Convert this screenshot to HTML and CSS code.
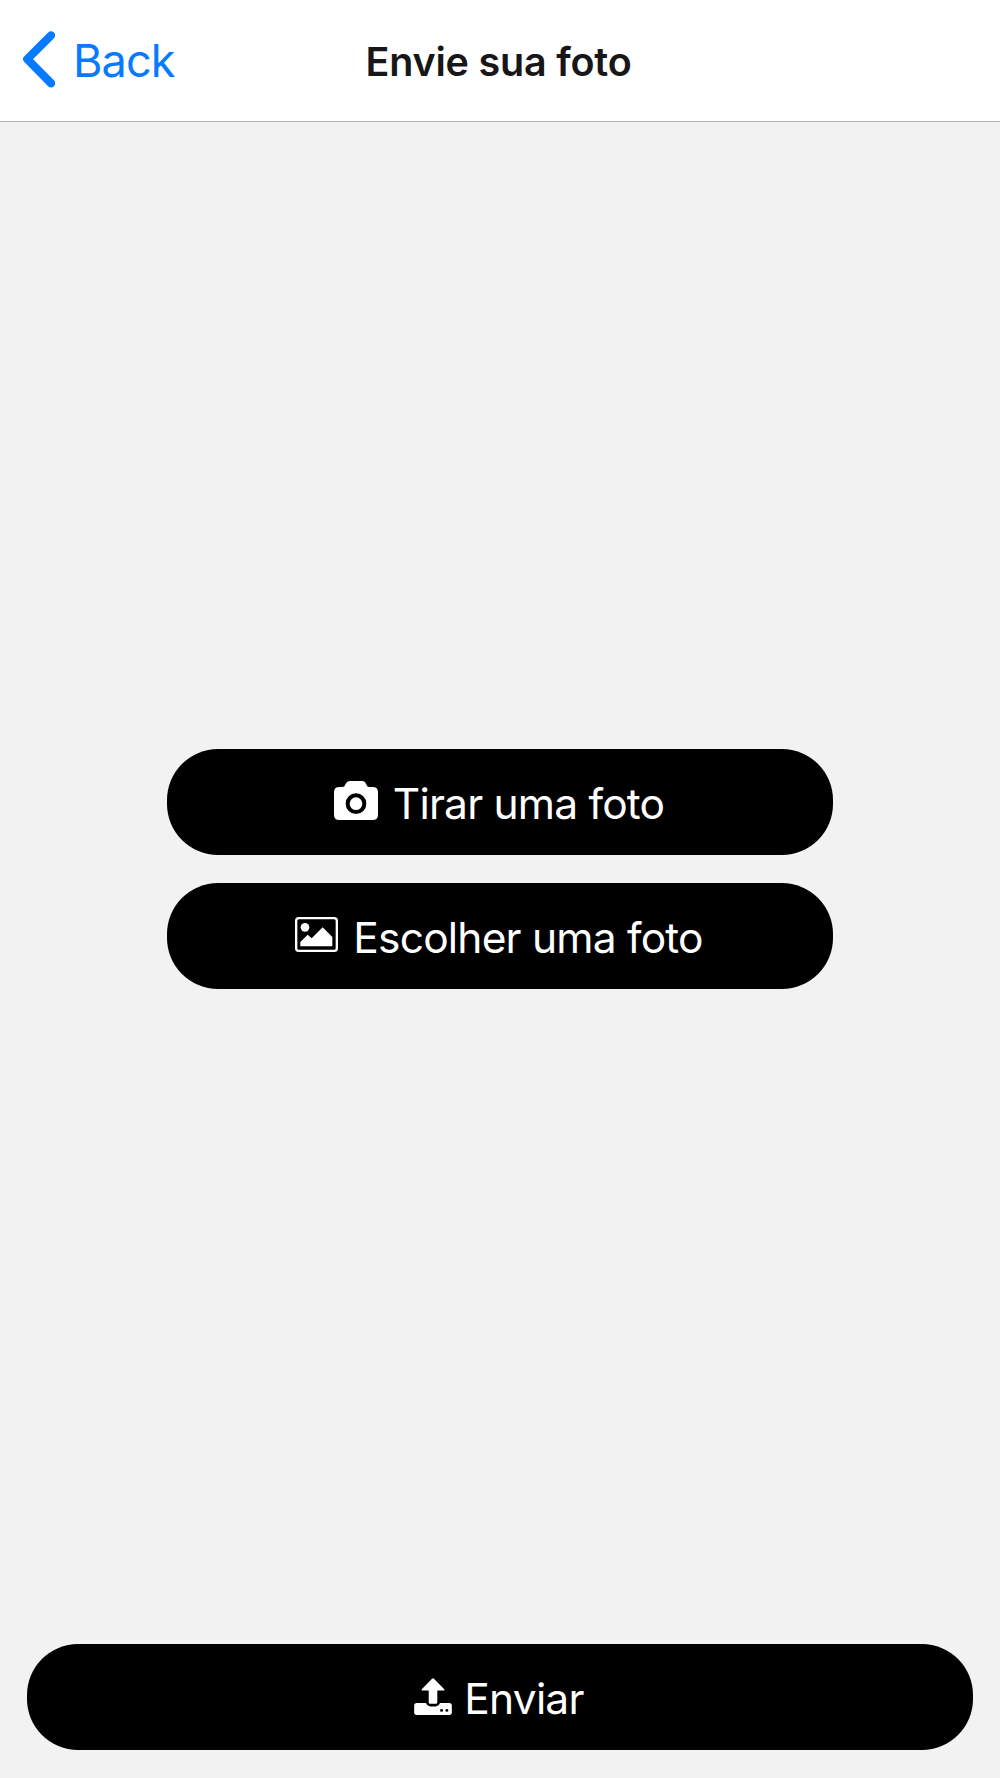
FILE: index.html
```html
<!DOCTYPE html>
<html lang="pt-BR">
<head>
  <meta charset="UTF-8">
  <meta name="viewport" content="width=device-width, initial-scale=1.0">
  <title>Envie sua foto</title>
  <link rel="stylesheet" href="styles.css">
</head>
<body>
  <header class="header">
    <a href="#" class="back">
      <svg class="back-icon" viewBox="0 0 97 170">
        <path d="M85 12 L13 84 L85 157" />
      </svg>
      <span>Back</span>
    </a>
    <h1>Envie sua foto</h1>
  </header>

  <main>
    <button class="btn btn-camera">
      <svg class="icon-camera" viewBox="0 0 132 117">
        <path d="M16 18 H26 Q31 18 33 13 L35 8 Q39 0 47 0 H86 Q93 0 96 8 L98 13 Q100 18 105 18 H116 Q132 18 132 34 V101 Q132 117 116 117 H16 Q0 117 0 101 V34 Q0 18 16 18 Z" />
        <circle cx="66" cy="68" r="25" />
      </svg>
      <span>Tirar uma foto</span>
    </button>
    <button class="btn btn-gallery">
      <svg class="icon-image" viewBox="0 0 129 105">
        <rect x="3.5" y="3.5" width="122" height="98" rx="8" />
        <circle cx="30" cy="31" r="13" />
        <path d="M16 88 V75 L38 53 L50 64 L83 31 L112 60 V88 Z" />
      </svg>
      <span>Escolher uma foto</span>
    </button>
  </main>

  <footer>
    <button class="btn btn-send">
      <svg class="icon-upload" viewBox="0 0 114 112">
        <path d="M8 76 H36 Q40 86 49 86 H65 Q74 86 78 76 H106 Q114 76 114 84 V104 Q114 112 106 112 H8 Q0 112 0 104 V84 Q0 76 8 76 Z" />
        <path d="M54 2 Q57 -1 60 2 L91 34 Q93 38 88 38 H70 V74 Q70 78 66 78 H48 Q44 78 44 74 V38 H26 Q21 38 23 34 Z" />
        <circle cx="83" cy="98" r="4.5" />
        <circle cx="99" cy="98" r="4.5" />
      </svg>
      <span>Enviar</span>
    </button>
  </footer>
</body>
</html>
```
FILE: styles.css
```css
* {
  box-sizing: border-box;
}
body {
  display: flex;
  flex-direction: column;
  height: 1778px;
  margin: 0;
  background: #f2f2f2;
  font-family: Inter, 'Liberation Sans', sans-serif;
}
.header {
  display: grid;
  grid-template-columns: 1fr auto 1fr;
  align-items: center;
  height: 122px;
  padding: 0 23px;
  background: #fff;
  border-bottom: 1px solid #b5b5b5;
}
.header h1 {
  margin: 0 0 0 -3px;
  padding-top: 2px;
  font-size: 39.5px;
  font-weight: 600;
  letter-spacing: -0.2px;
  color: #171719;
}
.back {
  display: flex;
  align-items: center;
  gap: 18px;
  font-size: 45px;
  letter-spacing: -0.9px;
  color: #087aff;
  text-decoration: none;
}
.back-icon {
  width: 32px;
  height: 57px;
  margin-bottom: 2px;
  fill: none;
  stroke: #087aff;
  stroke-width: 25;
  stroke-linecap: round;
  stroke-linejoin: round;
}
main {
  flex: 1;
  display: flex;
  flex-direction: column;
  align-items: center;
  justify-content: center;
  gap: 28px;
  padding-bottom: 28px;
}
footer {
  padding: 0 27px 28px;
}
.btn {
  display: flex;
  align-items: center;
  justify-content: center;
  width: 666px;
  height: 106px;
  padding: 0 2px 0 0;
  border: none;
  border-radius: 51px;
  background: #000;
  color: #fff;
  font-family: inherit;
  font-size: 42.5px;
  letter-spacing: -0.8px;
  cursor: pointer;
}
.btn svg {
  margin-bottom: 4px;
  fill: #fff;
}
.btn span {
  padding-top: 2px;
}
.btn-send {
  width: 100%;
}
.btn .icon-camera {
  width: 44px;
  height: 39px;
  margin-right: 15px;
}
.icon-camera circle {
  fill: none;
  stroke: #000;
  stroke-width: 12;
}
.btn .icon-image {
  width: 43px;
  height: 35px;
  margin-right: 15px;
  margin-bottom: 3px;
}
.icon-image rect {
  fill: none;
  stroke: #fff;
  stroke-width: 7;
}
.btn .icon-upload {
  width: 38px;
  height: 37px;
  margin-right: 12px;
  margin-bottom: 2px;
}
.icon-upload circle {
  fill: #000;
}
```
